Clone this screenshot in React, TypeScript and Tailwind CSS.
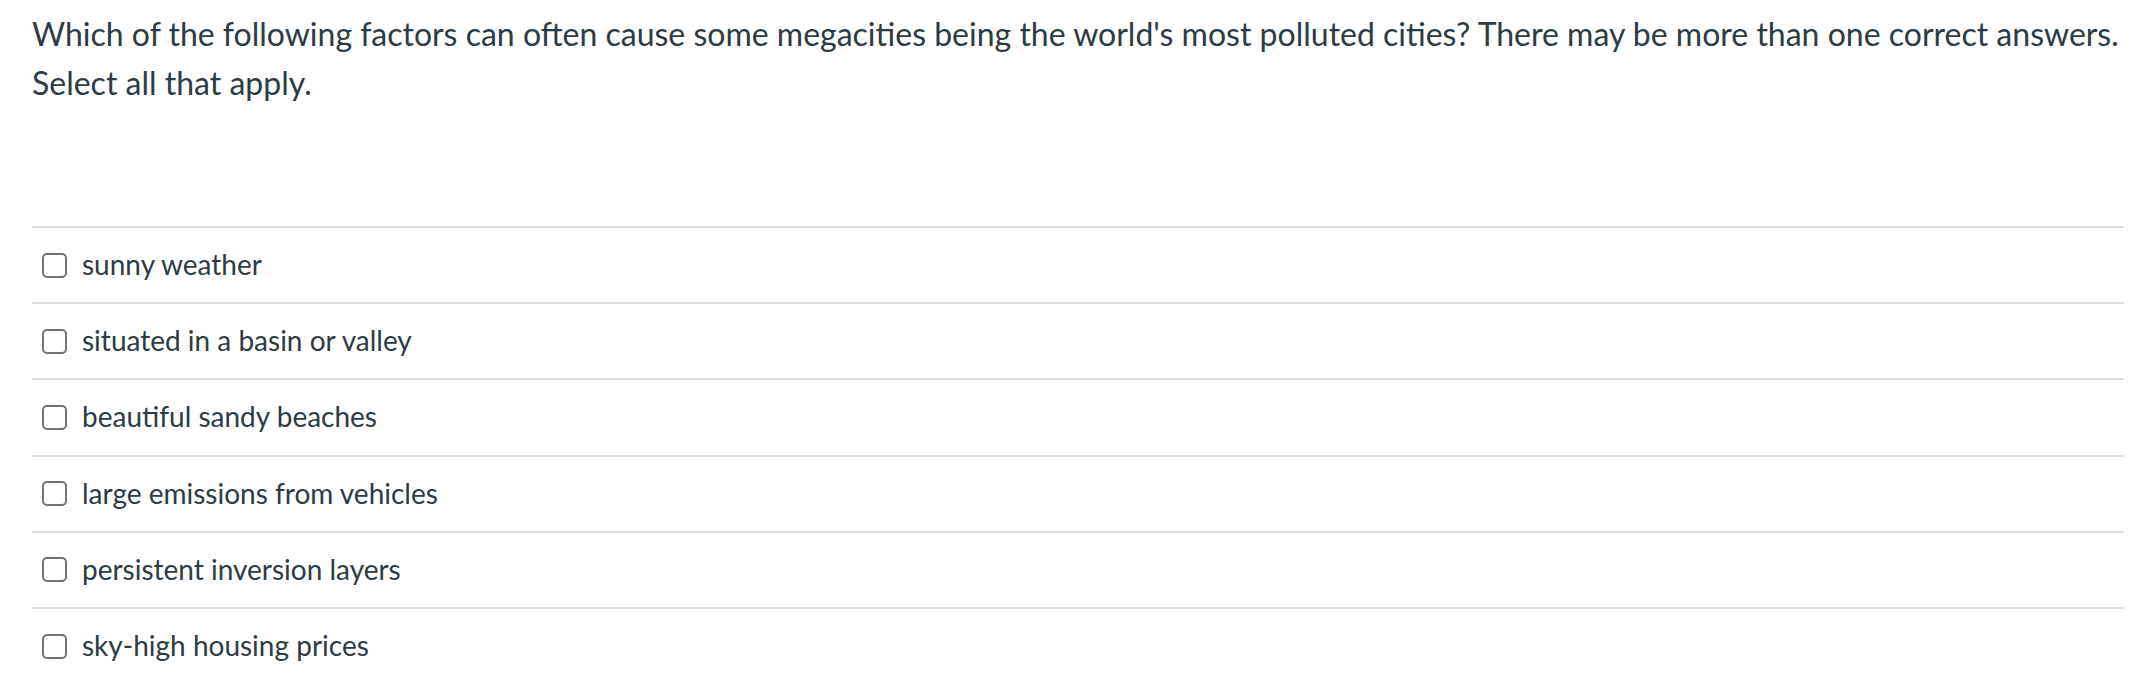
const answers = [
  'sunny weather',
  'situated in a basin or valley',
  'beautiful sandy beaches',
  'large emissions from vehicles',
  'persistent inversion layers',
  'sky-high housing prices'
]

function Checkbox() {
  return (
    <span className="box-border block size-[25px] shrink-0 rounded-[5px] border-2 border-[#737373] bg-white" />
  )
}

export default function App() {
  return (
    <div
      className="h-[698px] w-[2138px] bg-white text-[#2d3b45]"
      style={{ fontFamily: 'Lato, "Noto Sans", sans-serif' }}
    >
      <div className="ml-[32px] w-[2092px] pt-[10px]">
        <p className="whitespace-nowrap text-[32px] leading-[48.5px]">
          Which of the following factors can often cause some megacities being the world's most polluted cities? There may be more than one correct answers.
          <br />
          Select all that apply.
        </p>

        <div className="mt-[119px] flex flex-col">
          {answers.map((a) => (
            <label
              key={a}
              className="flex h-[76.2px] items-center gap-[15px] border-t-2 border-[#dedede] pl-[10px]"
            >
              <Checkbox />
              <span className="-mt-[2px] text-[28px] leading-none">{a}</span>
            </label>
          ))}
        </div>
      </div>
    </div>
  )
}
